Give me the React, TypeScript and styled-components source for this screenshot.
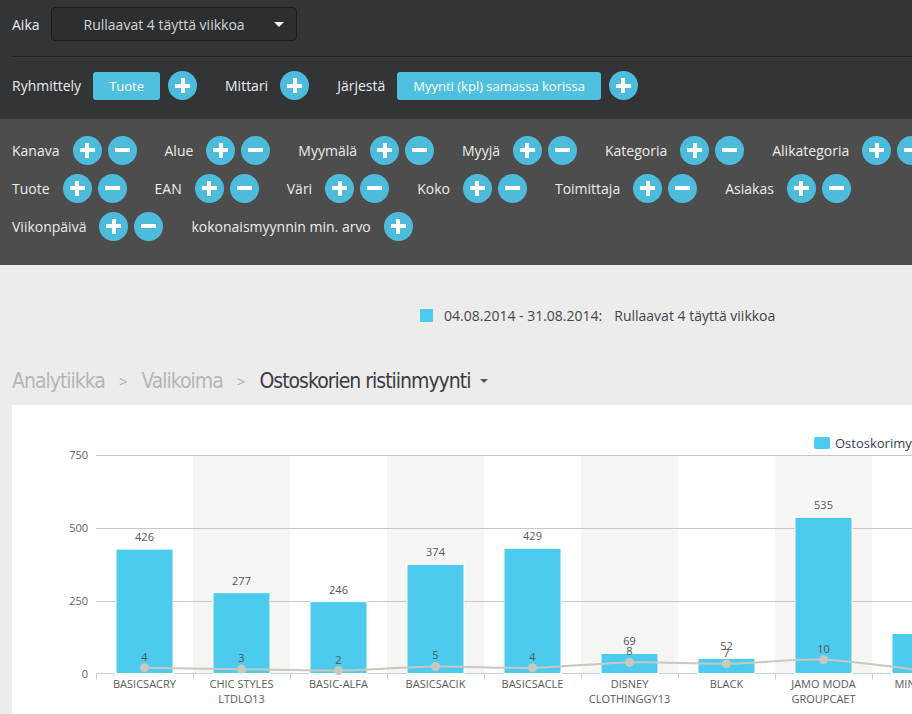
import React from "react";
import styled, { createGlobalStyle } from "styled-components";

const GlobalStyle = createGlobalStyle`
  html, body {
    margin: 0;
    padding: 0;
  }
  body {
    font-family: "Open Sans", "Liberation Sans", sans-serif;
    background: #ececec;
  }
`;

const Page = styled.div`
  width: 912px;
  height: 714px;
  overflow: hidden;
  background: #ececec;
`;

const TopBar = styled.div`
  background: #333436;
  color: #ececec;
  font-size: 14px;
`;

const TimeRow = styled.div`
  display: flex;
  align-items: center;
  gap: 11px;
  padding: 7px 12px 15px;
`;

const Select = styled.div`
  box-sizing: border-box;
  width: 246px;
  height: 34px;
  padding: 0 12px 0 32px;
  display: flex;
  align-items: center;
  justify-content: space-between;
  background: #2d2e30;
  border: 1px solid #1c1c1d;
  border-radius: 4px;
  color: #d4d4d4;
`;

const Caret = styled.span<{ $color?: string; $size?: number }>`
  display: inline-block;
  flex: none;
  width: 0;
  height: 0;
  border-left: ${(p) => p.$size ?? 5}px solid transparent;
  border-right: ${(p) => p.$size ?? 5}px solid transparent;
  border-top: ${(p) => p.$size ?? 5}px solid ${(p) => p.$color ?? "#f2f2f2"};
`;

const Divider = styled.div`
  margin-left: 12px;
  border-top: 1px solid #242425;
  border-bottom: 1px solid #3a3b3d;
`;

const GroupRow = styled.div`
  display: flex;
  align-items: center;
  gap: 28px;
  padding: 13px 12px 19px;
`;

const Group = styled.div`
  display: flex;
  align-items: center;
  gap: 8px;
`;

const GroupLabel = styled.span`
  margin-right: 4px;
`;

const PillButton = styled.div`
  height: 28px;
  padding: 0 16px;
  display: flex;
  align-items: center;
  border-radius: 3px;
  background: #4fbfdf;
  color: #fff;
  font-size: 13px;
  white-space: nowrap;
`;

const CircleButton = styled.span<{ $minus?: boolean }>`
  position: relative;
  flex: none;
  width: 29px;
  height: 29px;
  border-radius: 50%;
  background: #4dbcdc;

  &::before {
    content: "";
    position: absolute;
    left: 7px;
    top: 12.5px;
    width: 15px;
    height: 4px;
    background: #fff;
  }

  &::after {
    content: "";
    display: ${(p) => (p.$minus ? "none" : "block")};
    position: absolute;
    left: 12.5px;
    top: 7px;
    width: 4px;
    height: 15px;
    background: #fff;
  }
`;

const FilterPanel = styled.div`
  background: #4d4d4d;
  color: #ececec;
  font-size: 14px;
  padding: 12px 12px 20px;
`;

const FilterRow = styled.div`
  display: flex;
  align-items: center;
  height: 38px;
  white-space: nowrap;
`;

const FilterItem = styled.div`
  display: flex;
  align-items: center;
  gap: 6px;
  margin-right: 28px;
`;

const FilterLabel = styled.span`
  margin-right: 7px;
`;

const DateLegend = styled.div`
  display: flex;
  align-items: center;
  margin-top: 40px;
  padding-left: 420px;
  height: 20px;
  font-size: 14px;
  color: #444;
  white-space: nowrap;
`;

const Swatch = styled.span`
  flex: none;
  display: inline-block;
  width: 13px;
  height: 13px;
  background: #4dcbee;
`;

const DateText = styled.span`
  margin-left: 11px;
`;

const PeriodText = styled.span`
  margin-left: 12px;
`;

const Breadcrumb = styled.div`
  display: flex;
  align-items: center;
  margin-top: 41px;
  padding-left: 12px;
  height: 30px;
  font-family: "DejaVu Sans Condensed", "DejaVu Sans", sans-serif;
  font-size: 21px;
  letter-spacing: -1px;
  white-space: nowrap;
`;

const Crumb = styled.span<{ $current?: boolean }>`
  color: ${(p) => (p.$current ? "#3b3b42" : "#b6b6b6")};
`;

const Sep = styled.span`
  margin: 0 14px 0 14px;
  color: #b0b0b0;
  font-family: "Open Sans", sans-serif;
  font-size: 15px;
  letter-spacing: 0;
`;

const TitleCaret = styled.span`
  margin-left: 10px;
  display: flex;
  align-items: center;
`;

const Card = styled.div`
  margin: 9px 0 0 12px;
  height: 309px;
  background: #fff;
  overflow: hidden;
`;

const ChartSvg = styled.svg`
  display: block;
  font-family: "Open Sans", "Liberation Sans", sans-serif;
`;

type Item = { name: string[]; sales: number; baskets: number };

const items: Item[] = [
  { name: ["BASICSACRY"], sales: 426, baskets: 4 },
  { name: ["CHIC STYLES", "LTDLO13"], sales: 277, baskets: 3 },
  { name: ["BASIC-ALFA"], sales: 246, baskets: 2 },
  { name: ["BASICSACIK"], sales: 374, baskets: 5 },
  { name: ["BASICSACLE"], sales: 429, baskets: 4 },
  { name: ["DISNEY", "CLOTHINGGY13"], sales: 69, baskets: 8 },
  { name: ["BLACK"], sales: 52, baskets: 7 },
  { name: ["JAMO MODA", "GROUPCAET"], sales: 535, baskets: 10 },
  { name: ["MINIMUM"], sales: 137, baskets: 2 },
];

// chart is drawn in page coordinates (viewBox starts at the card's top-left)
const PLOT_LEFT = 96;
const COL = 97;
const BASE = 673.5;
const barY = (v: number) => BASE - v * 0.292;
const lineY = (v: number) => BASE - 0.3 - v * 1.35;
const colCenter = (i: number) => PLOT_LEFT + COL * i + COL / 2;

function splinePath(pts: [number, number][]) {
  let d = `M${pts[0][0]},${pts[0][1]}`;
  for (let i = 0; i < pts.length - 1; i++) {
    const p0 = pts[i - 1] ?? pts[i];
    const p1 = pts[i];
    const p2 = pts[i + 1];
    const p3 = pts[i + 2] ?? p2;
    const c1x = p1[0] + (p2[0] - p0[0]) / 6;
    const c1y = p1[1] + (p2[1] - p0[1]) / 6;
    const c2x = p2[0] - (p3[0] - p1[0]) / 6;
    const c2y = p2[1] - (p3[1] - p1[1]) / 6;
    d += ` C${c1x},${c1y} ${c2x},${c2y} ${p2[0]},${p2[1]}`;
  }
  return d;
}

const Chart: React.FC = () => {
  const points: [number, number][] = items.map((it, i) => [colCenter(i), lineY(it.baskets)]);
  const grid = [750, 500, 250];

  return (
    <ChartSvg width={900} height={309} viewBox="12 405 900 309">
      <rect x={814} y={437} width={16} height={12} rx={2} fill="#4dcbee" />
      <text x={835} y={447.5} fontSize={13} fill="#333d5a">
        Ostoskorimyynti (kpl)
      </text>

      {items.map((_, i) =>
        i % 2 === 1 ? (
          <rect key={i} x={PLOT_LEFT + COL * i} y={455} width={COL} height={BASE - 455} fill="#f5f5f3" />
        ) : null
      )}
      {grid.map((g) => (
        <g key={g}>
          <line x1={PLOT_LEFT} x2={912} y1={Math.round(barY(g)) + 0.5} y2={Math.round(barY(g)) + 0.5} stroke="#c6c6c6" />
          <text x={88} y={barY(g) + 4} textAnchor="end" fontSize={11} fill="#606060">
            {g}
          </text>
        </g>
      ))}
      <text x={88} y={BASE + 4} textAnchor="end" fontSize={11} fill="#606060">
        0
      </text>
      <line x1={PLOT_LEFT} x2={912} y1={BASE} y2={BASE} stroke="#c0d0e0" />
      {items.map((_, i) => (
        <line
          key={i}
          x1={PLOT_LEFT + COL * i + 0.5}
          x2={PLOT_LEFT + COL * i + 0.5}
          y1={BASE}
          y2={BASE + 6}
          stroke="#c0d0e0"
        />
      ))}
      {items.map((it, i) => {
        const top = barY(it.sales);
        const cx = colCenter(i);
        return (
          <g key={i}>
            <rect x={cx - 28.5} y={top} width={57} height={BASE - top} fill="#4dcbee" stroke="#fff" strokeWidth={1} />
            <text x={cx} y={top - 8} textAnchor="middle" fontSize={11} fill="#555">
              {it.sales}
            </text>
            {it.name.map((line, k) => (
              <text key={k} x={cx} y={688 + k * 15} textAnchor="middle" fontSize={11} fill="#5a5a5a">
                {line}
              </text>
            ))}
          </g>
        );
      })}
      <path d={splinePath(points)} fill="none" stroke="#c8c8be" strokeWidth={2} />
      {points.map(([x, y], i) => (
        <g key={i}>
          <circle cx={x} cy={y} r={4.5} fill="#c8c8be" />
          <text x={x} y={y - 7} textAnchor="middle" fontSize={11} fill="#555">
            {items[i].baskets}
          </text>
        </g>
      ))}
    </ChartSvg>
  );
};

const filterRows: { label: string; minus: boolean }[][] = [
  [
    { label: "Kanava", minus: true },
    { label: "Alue", minus: true },
    { label: "Myymälä", minus: true },
    { label: "Myyjä", minus: true },
    { label: "Kategoria", minus: true },
    { label: "Alikategoria", minus: true },
  ],
  [
    { label: "Tuote", minus: true },
    { label: "EAN", minus: true },
    { label: "Väri", minus: true },
    { label: "Koko", minus: true },
    { label: "Toimittaja", minus: true },
    { label: "Asiakas", minus: true },
  ],
  [
    { label: "Viikonpäivä", minus: true },
    { label: "kokonaismyynnin min. arvo", minus: false },
  ],
];

const App: React.FC = () => {
  return (
    <>
      <GlobalStyle />
      <Page>
        <TopBar>
          <TimeRow>
            <span>Aika</span>
            <Select>
              <span>Rullaavat 4 täyttä viikkoa</span>
              <Caret />
            </Select>
          </TimeRow>
          <Divider />
          <GroupRow>
            <Group>
              <GroupLabel>Ryhmittely</GroupLabel>
              <PillButton>Tuote</PillButton>
              <CircleButton />
            </Group>
            <Group>
              <GroupLabel>Mittari</GroupLabel>
              <CircleButton />
            </Group>
            <Group>
              <GroupLabel>Järjestä</GroupLabel>
              <PillButton>Myynti (kpl) samassa korissa</PillButton>
              <CircleButton />
            </Group>
          </GroupRow>
        </TopBar>

        <FilterPanel>
          {filterRows.map((row, r) => (
            <FilterRow key={r}>
              {row.map((f) => (
                <FilterItem key={f.label}>
                  <FilterLabel>{f.label}</FilterLabel>
                  <CircleButton />
                  {f.minus && <CircleButton $minus />}
                </FilterItem>
              ))}
            </FilterRow>
          ))}
        </FilterPanel>

        <DateLegend>
          <Swatch />
          <DateText>04.08.2014 - 31.08.2014:</DateText>
          <PeriodText>Rullaavat 4 täyttä viikkoa</PeriodText>
        </DateLegend>

        <Breadcrumb>
          <Crumb>Analytiikka</Crumb>
          <Sep>&gt;</Sep>
          <Crumb>Valikoima</Crumb>
          <Sep>&gt;</Sep>
          <Crumb $current>Ostoskorien ristiinmyynti</Crumb>
          <TitleCaret>
            <Caret $color="#555" $size={4} />
          </TitleCaret>
        </Breadcrumb>

        <Card>
          <Chart />
        </Card>
      </Page>
    </>
  );
};

export default App;
